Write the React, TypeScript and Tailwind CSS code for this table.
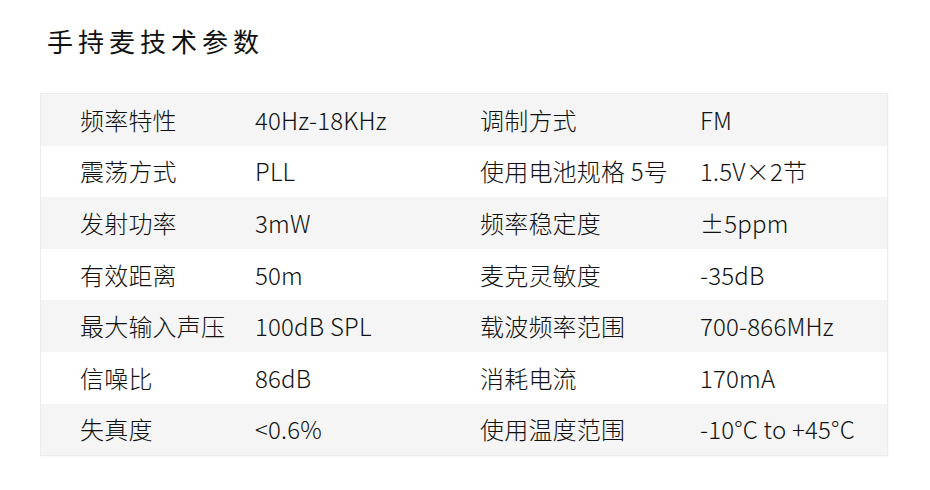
import React from "react";

type Row = [string, string, string, string];

const rows: Row[] = [
  ["频率特性", "40Hz-18KHz", "调制方式", "FM"],
  ["震荡方式", "PLL", "使用电池规格 5号", "1.5V×2节"],
  ["发射功率", "3mW", "频率稳定度", "±5ppm"],
  ["有效距离", "50m", "麦克灵敏度", "-35dB"],
  ["最大输入声压", "100dB SPL", "载波频率范围", "700-866MHz"],
  ["信噪比", "86dB", "消耗电流", "170mA"],
  ["失真度", "<0.6%", "使用温度范围", "-10°C to +45°C"],
];

const App: React.FC = () => {
  return (
    <div
      className="w-[930px] h-[490px] bg-white pt-[27px] pl-[40px] text-[#111]"
      style={{ fontFamily: '"Noto Sans CJK SC", "Noto Sans", sans-serif' }}
    >
      {/* Title */}
      <h1 className="pl-[7px] text-[26px] leading-[28px] tracking-[5px] font-normal">手持麦技术参数</h1>

      {/* Spec table */}
      <div className="mt-[38px] w-[848px] border border-[#ececec] shadow-[1px_1px_2px_rgba(0,0,0,0.04)]">
        {rows.map((r, i) => (
          <div
            key={i}
            className={`flex items-center h-[51.6px] text-[24px] font-light tracking-[0.2px] ${
              i % 2 === 0 ? "bg-[#f4f5f4]" : "bg-white"
            }`}
          >
            <div className="w-[214px] pl-[39px] whitespace-nowrap">{r[0]}</div>
            <div className="w-[225px] whitespace-nowrap">{r[1]}</div>
            <div className="w-[220px] whitespace-nowrap">{r[2]}</div>
            <div className="flex-1 whitespace-nowrap">{r[3]}</div>
          </div>
        ))}
      </div>
    </div>
  );
};

export default App;
